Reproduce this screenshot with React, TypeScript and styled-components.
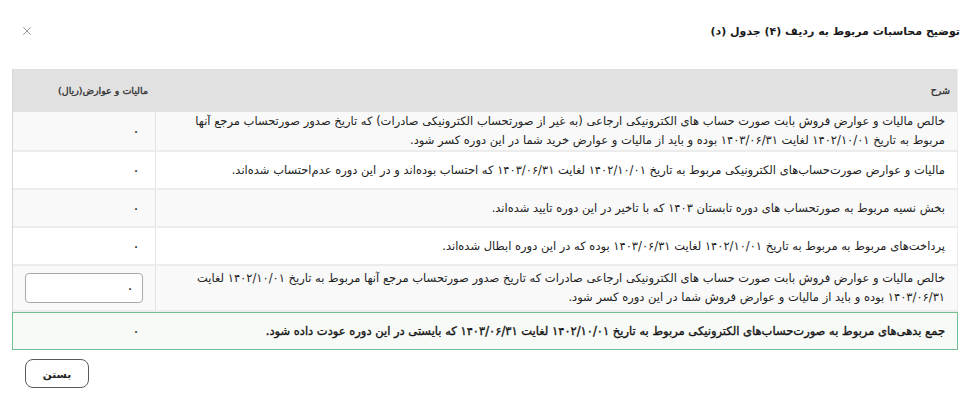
import React from "react";
import styled, { createGlobalStyle } from "styled-components";
import { X } from "lucide-react";

const Global = createGlobalStyle`
  html, body { margin: 0; padding: 0; background: #fff; }
  body { font-family: "DejaVu Sans", "Noto Sans", sans-serif; color: #222; }
  * { box-sizing: border-box; }
`;

const Dialog = styled.div`
  direction: rtl;
  width: 975px;
  height: 408px;
  background: #fff;
  display: flex;
  flex-direction: column;
  padding: 0 17px 0 12px;
`;

const TitleBar = styled.div`
  height: 62px;
  display: flex;
  align-items: center;
  justify-content: space-between;
  margin: 0 -2px 7px 8px;
`;

const Title = styled.h2`
  margin: 0;
  font-size: 11px;
  font-weight: 700;
  color: #1a1a1a;
`;

const CloseIcon = styled.button`
  border: 0;
  background: none;
  padding: 0;
  display: flex;
  color: #8a8a8a;
  cursor: pointer;
`;

const Table = styled.div`
  display: flex;
  flex-direction: column;
  border-left: 1px solid #d6d6d6;
  border-right: 1px solid #ececec;
`;

const Row = styled.div<{ $bg?: string; $header?: boolean; $total?: boolean }>`
  display: grid;
  grid-template-columns: 1fr 142px;
  background: ${(p) => p.$bg || "#fff"};
  min-height: ${(p) => (p.$header ? "43px" : "38px")};
  border-bottom: ${(p) => (p.$header || p.$total ? "0" : "2px solid #ececec")};
  ${(p) =>
    p.$total &&
    `
    border: 1.5px solid #74bf8f;
    margin: 0 -1px 0 -1px;
    `}
`;

const HeadCell = styled.div`
  display: flex;
  align-items: center;
  padding: 0 7px 0 8px;
  font-size: 9.5px;
  font-weight: 400;
  -webkit-text-stroke: 0.35px #333;
  color: #333;
`;

const TextCell = styled.div<{ $divider?: boolean; $bold?: boolean }>`
  display: flex;
  align-items: center;
  padding: 0 12px;
  font-size: 11.5px;
  line-height: 19px;
  font-weight: 400;
  color: ${(p) => (p.$bold ? "#141414" : "#222")};
  -webkit-text-stroke: ${(p) => (p.$bold ? "0.35px #141414" : "0")};
  border-left: ${(p) => (p.$divider ? "1px solid #e3e3e3" : "0")};
`;

const ValueCell = styled.div<{ $field?: boolean }>`
  display: flex;
  align-items: center;
  padding: ${(p) => (p.$field ? "7px 12px 7px 12px" : "8px 15px 8px 12px")};
  font-size: 15px;
  color: #333;
`;

const Input = styled.input`
  direction: rtl;
  width: 118px;
  height: 30px;
  border: 1px solid #a9a9a9;
  border-radius: 4px;
  padding: 0 8px;
  font-family: inherit;
  font-size: 15px;
  color: #333;
  background: #fff;
  outline: none;
`;

const Footer = styled.div`
  display: flex;
  justify-content: flex-end;
  padding: 9px 0 0 13px;
`;

const CloseButton = styled.button`
  width: 64px;
  height: 29px;
  border: 1.5px solid #5a5a5a;
  border-radius: 8px;
  background: #fff;
  font-family: inherit;
  font-size: 10.5px;
  font-weight: 700;
  color: #222;
  cursor: pointer;
`;

type Item = { text: string; bg: string; input?: boolean };

const rows: Item[] = [
  {
    text:
      "خالص مالیات و عوارض فروش بابت صورت حساب های الکترونیکی ارجاعی (به غیر از صورتحساب الکترونیکی صادرات) که تاریخ صدور صورتحساب مرجع آنها مربوط به تاریخ ۱۴۰۲/۱۰/۰۱ لغایت ۱۴۰۳/۰۶/۳۱ بوده و باید از مالیات و عوارض خرید شما در این دوره کسر شود.",
    bg: "#f9f9f9",
  },
  {
    text:
      "مالیات و عوارض صورت‌حساب‌های الکترونیکی مربوط به تاریخ ۱۴۰۲/۱۰/۰۱ لغایت ۱۴۰۳/۰۶/۳۱ که احتساب بوده‌اند و در این دوره عدم‌احتساب شده‌اند.",
    bg: "#fff",
  },
  {
    text: "بخش نسیه مربوط به صورتحساب های دوره تابستان ۱۴۰۳ که با تاخیر در این دوره تایید شده‌اند.",
    bg: "#f9f9f9",
  },
  {
    text: "پرداخت‌های مربوط به مربوط به تاریخ ۱۴۰۲/۱۰/۰۱ لغایت ۱۴۰۳/۰۶/۳۱ بوده که در این دوره ابطال شده‌اند.",
    bg: "#fff",
  },
  {
    text:
      "خالص مالیات و عوارض فروش بابت صورت حساب های الکترونیکی ارجاعی صادرات که تاریخ صدور صورتحساب مرجع آنها مربوط به تاریخ ۱۴۰۲/۱۰/۰۱ لغایت ۱۴۰۳/۰۶/۳۱ بوده و باید از مالیات و عوارض فروش شما در این دوره کسر شود.",
    bg: "#f9f9f9",
    input: true,
  },
];

export default function App() {
  return (
    <>
      <Global />
      <Dialog>
        <TitleBar>
          <Title>توضیح محاسبات مربوط به ردیف (۴) جدول (د)</Title>
          <CloseIcon aria-label="close">
            <X size={14} strokeWidth={1.5} />
          </CloseIcon>
        </TitleBar>
        <Table>
          <Row $header $bg="#e1e1e1">
            <HeadCell>شرح</HeadCell>
            <HeadCell>مالیات و عوارض(ریال)</HeadCell>
          </Row>
          {rows.map((r, i) => (
            <Row key={i} $bg={r.bg}>
              <TextCell $divider>{r.text}</TextCell>
              <ValueCell $field={r.input}>{r.input ? <Input defaultValue="۰" /> : "۰"}</ValueCell>
            </Row>
          ))}
          <Row $total $bg="#f7faf7">
            <TextCell $bold>
              جمع بدهی‌های مربوط به صورت‌حساب‌های الکترونیکی مربوط به تاریخ ۱۴۰۲/۱۰/۰۱ لغایت ۱۴۰۳/۰۶/۳۱ که بایستی در این دوره عودت داده شود.
            </TextCell>
            <ValueCell>۰</ValueCell>
          </Row>
        </Table>
        <Footer>
          <CloseButton>بستن</CloseButton>
        </Footer>
      </Dialog>
    </>
  );
}
